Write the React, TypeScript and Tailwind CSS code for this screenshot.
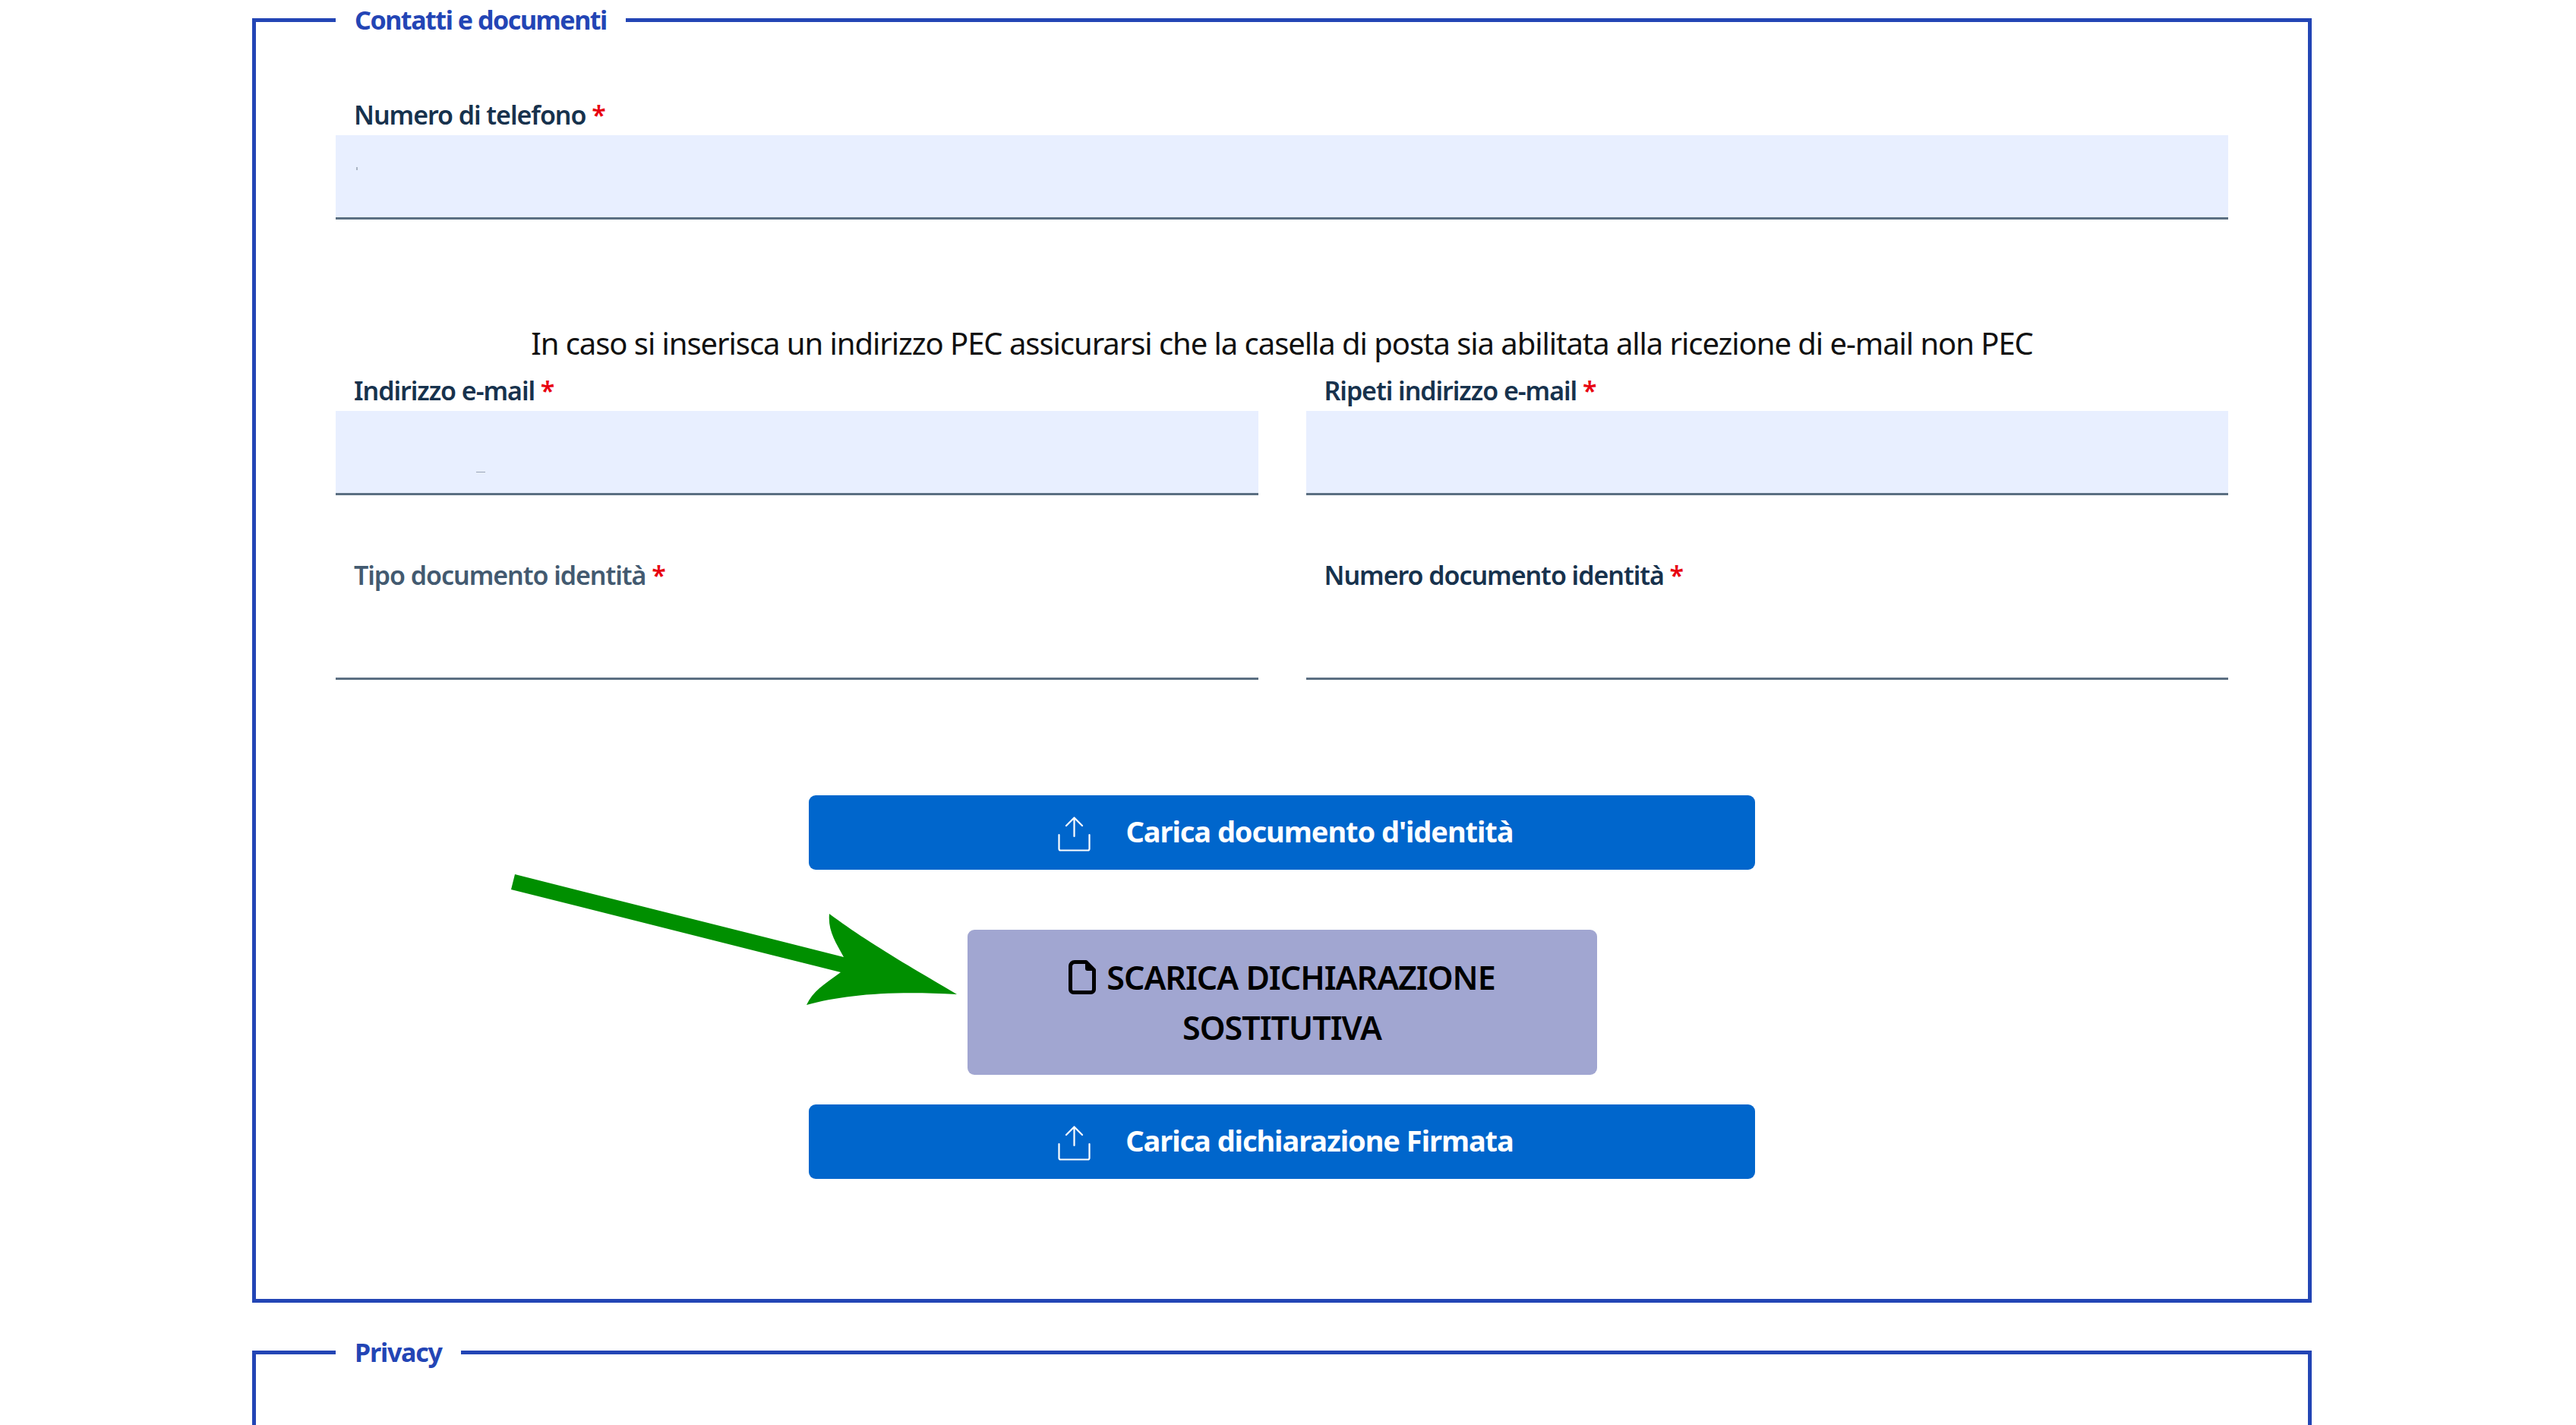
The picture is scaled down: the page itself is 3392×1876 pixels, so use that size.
import type { ReactNode } from "react";

function UploadIcon() {
  return (
    <svg width="43" height="46" viewBox="0 0 43 46" fill="none" stroke="white" strokeWidth="2.2" strokeLinecap="round" strokeLinejoin="round" className="mt-[4px]">
      <path d="M21.5 26V1.5M11 12 21.5 1.5 32 12" />
      <path d="M1.5 24v18.5a2 2 0 0 0 2 2h36a2 2 0 0 0 2-2V24" />
    </svg>
  );
}

function FileIcon() {
  return (
    <svg width="36" height="45" viewBox="0 0 36 45" fill="none" stroke="black" strokeWidth="5" strokeLinejoin="round" className="mr-[14px] inline-block align-[-6px]">
      <path d="M8 2.5h15L33.5 13v25.5a4 4 0 0 1-4 4h-23a4 4 0 0 1-4-4V8A5.5 5.5 0 0 1 8 2.5Z" />
      <path d="M23 3v8a2 2 0 0 0 2 2h8Z" fill="black" strokeWidth="2" />
    </svg>
  );
}

function Field({ label, filled = true, muted = false, children }: { label: string; filled?: boolean; muted?: boolean; children?: ReactNode }) {
  return (
    <div>
      <label className={`block h-[52px] pl-[24px] text-[34px] leading-[50px] font-semibold tracking-[-1.05px] ${muted ? "text-[#435a70]" : "text-[#17324d]"}`}>
        {label} <span className="text-[#e8000f]">*</span>
      </label>
      <div className={`relative h-[111px] border-b-[3px] border-[#5b6f82] ${filled ? "bg-[#e8efff]" : ""}`}>{children}</div>
    </div>
  );
}

function BlueButton({ label }: { label: string }) {
  return (
    <button className="flex h-[98px] w-[1246px] items-center justify-center gap-[46px] rounded-[9px] bg-[#0066cc] pl-[10px] text-[38px] font-bold tracking-[-1.05px] text-white">
      <UploadIcon />
      <span className="mb-[4px]">{label}</span>
    </button>
  );
}

export default function App() {
  return (
    <div className="relative h-[1876px] overflow-hidden bg-white pr-[348px] pl-[332px] font-['Noto_Sans',sans-serif]">
      <fieldset className="border-[5px] border-[#2345b5] pb-[158px]">
        <legend className="ml-[105px] px-[25px] text-[34px] leading-[53px] font-bold tracking-[-1.45px] text-[#2345b5]">
          Contatti e documenti
        </legend>
        <div className="mx-[105px] pt-[73px]">
          <Field label="Numero di telefono">
            <span className="absolute top-[42px] left-[27px] h-[4px] w-[2px] bg-[#aab4c4]" />
          </Field>
          <p className="mt-[133px] h-[60px] text-center text-[40px] leading-[60px] tracking-[-1.05px] text-[#111]">
            In caso si inserisca un indirizzo PEC assicurarsi che la casella di posta sia abilitata alla ricezione di e-mail non PEC
          </p>
          <div className="mt-[7px] grid grid-cols-2 gap-x-[63px] gap-y-[80px]">
            <Field label="Indirizzo e-mail">
              <span className="absolute top-[80px] left-[185px] h-[1px] w-[12px] bg-[#9aa5b5]" />
            </Field>
            <Field label="Ripeti indirizzo e-mail" />
            <Field label="Tipo documento identità" filled={false} muted />
            <Field label="Numero documento identità" filled={false} />
          </div>
          <div className="mt-[152px] flex flex-col items-center">
            <BlueButton label="Carica documento d'identità" />
            <button className="mt-[79px] h-[191px] w-[829px] rounded-[9px] bg-[#a1a6d1] text-center text-[43px] leading-[66px] font-semibold tracking-[-1px] text-black">
              <FileIcon />
              SCARICA DICHIARAZIONE
              <br />
              SOSTITUTIVA
            </button>
            <div className="mt-[39px]">
              <BlueButton label="Carica dichiarazione Firmata" />
            </div>
          </div>
        </div>
      </fieldset>
      <fieldset className="mt-[39px] h-[200px] border-[5px] border-b-0 border-[#2345b5]">
        <legend className="ml-[105px] px-[25px] text-[34px] leading-[53px] font-bold tracking-[-1.2px] text-[#2345b5]">
          Privacy
        </legend>
      </fieldset>
      <svg className="absolute top-0 left-0" width="1400" height="1400" fill="#008f00">
        <path d="M678 1151 673 1171 1107 1280C1085 1296 1070 1305 1062 1323 1110 1310 1170 1304 1260 1309 1180 1262 1135 1235 1092 1203 1090 1225 1100 1240 1111 1260Z" />
      </svg>
    </div>
  );
}
